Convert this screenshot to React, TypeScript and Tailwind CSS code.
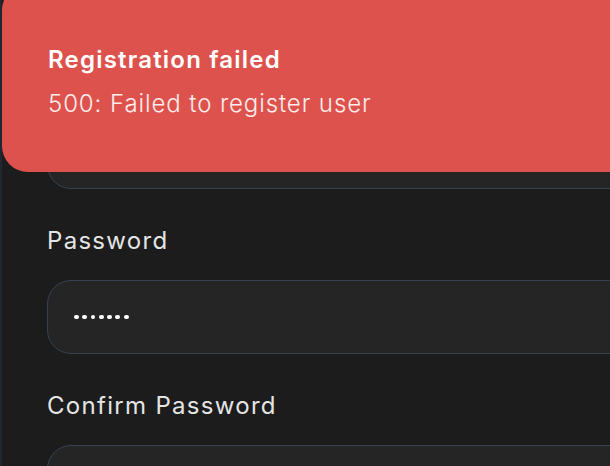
import React from "react";

const Field = ({ label, dots, hidden }: { label: string; dots?: number; hidden?: boolean }) => (
  <div className="flex flex-col">
    <label
      className={`text-[24px] leading-[30px] tracking-[1.3px] text-[#e5e5e5] mb-[24px] ${hidden ? "invisible" : ""}`}
    >
      {label}
    </label>
    <div className="h-[74px] w-[600px] rounded-[24px] border-[1.5px] border-[#374151] bg-[#252525] flex items-center gap-[3.5px] px-[26px]">
      {Array.from({ length: dots ?? 0 }).map((_, i) => (
        <span key={i} className="w-[4.8px] h-[4.8px] rounded-full bg-white" />
      ))}
    </div>
  </div>
);

const App = () => {
  return (
    <div
      className="relative w-[610px] h-[466px] overflow-hidden bg-[#1c1c1c] border-l-2 border-[#1f2733]"
      style={{ fontFamily: "Inter, 'Noto Sans', sans-serif" }}
    >
      <div className="flex flex-col gap-[37px] pl-[45px] pt-[61px]">
        {/* covered by the toast */}
        <Field label="Email" hidden />
        <Field label="Password" dots={7} />
        <Field label="Confirm Password" />
      </div>

      <div className="absolute left-0 top-[-16px] w-[640px] h-[188px] rounded-[26px] bg-[#dd524c] flex flex-col justify-center pl-[46px] pt-[8px]">
        <div className="text-white text-[24px] font-semibold leading-[30px] tracking-[1.2px]">Registration failed</div>
        <div className="text-white/90 text-[24px] font-light leading-[30px] tracking-[0.9px] mt-[14px]">
          500: Failed to register user
        </div>
      </div>
    </div>
  );
};

export default App;
